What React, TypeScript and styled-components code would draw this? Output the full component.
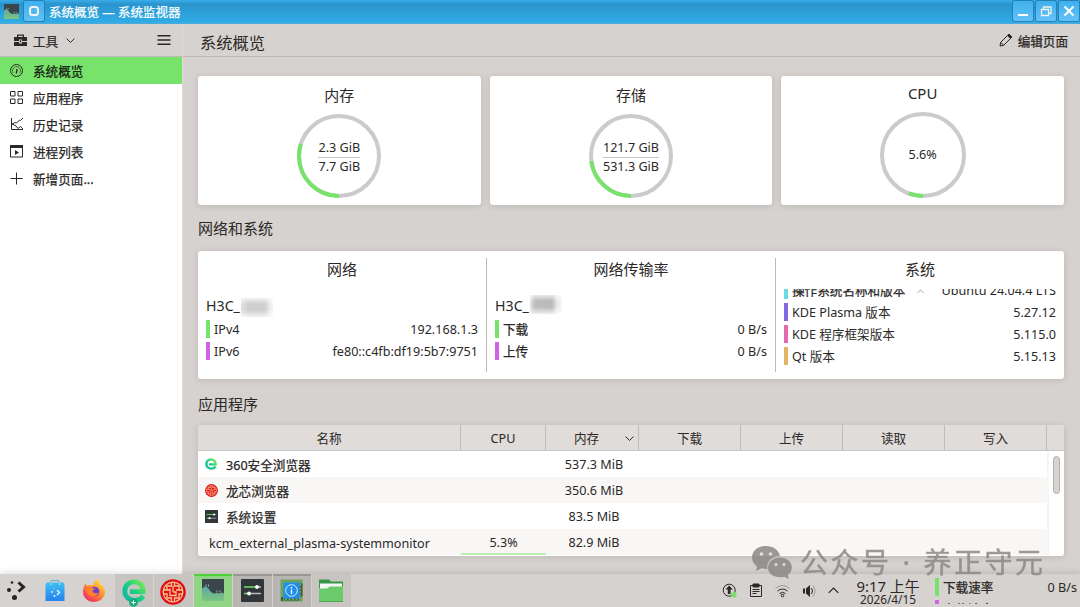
import type { ReactNode } from 'react';
import styled, { createGlobalStyle, css } from 'styled-components';

const green = '#78e36a';
const bg = '#d6d2cf';
const ink = '#2b2827';

const GlobalStyle = createGlobalStyle`
  * {
    box-sizing: border-box;
  }
  body {
    margin: 0;
    overflow: hidden;
    background: ${bg};
    color: ${ink};
    font-family: 'Noto Sans', 'Noto Sans CJK SC', sans-serif;
    font-size: 12.6px;
    line-height: 18px;
  }
  svg {
    display: block;
    flex: none;
  }
`;

const Screen = styled.div`
  position: relative;
  display: flex;
  flex-direction: column;
  width: 1080px;
  height: 607px;
  overflow: hidden;
  white-space: nowrap;
`;

/* hinted CJK glyphs look a little heavier than regular */
const firm = css`
  -webkit-text-stroke: 0.25px currentColor;
`;

/* ---- title bar ---- */
const TitleBar = styled.header`
  display: flex;
  align-items: flex-start;
  height: 24px;
  flex: none;
  padding: 1px 1px 0 4px;
  background: linear-gradient(#38aeea 0, #2a94cc 4px, #2fa9e3 20px, #31aee9 23px, #6da5c4 24px);
  color: #fff;
`;
const TitleIcon = styled.div`
  width: 15px;
  margin: 3px 5px 0 0;
`;
const TitleText = styled.div`
  flex: 1;
  padding: 3px 0 0 5px;
  font-size: 12.5px;
  ${firm}
`;
const TitleButton = styled.div`
  width: 20px;
  height: 20px;
  margin-left: 3px;
  border-radius: 2px;
  background: linear-gradient(#3eb0ee, #62c2f8);
  box-shadow: 0 0 0 1px #2680b4;
  ${TitleIcon} + & {
    margin-left: 0;
  }
`;

/* ---- window ---- */
const Body = styled.div`
  display: flex;
  flex: 1;
  min-height: 0;
`;
const Sidebar = styled.aside`
  width: 182px;
  flex: none;
  background: #fff;
`;
const SidebarHeader = styled.div`
  display: flex;
  align-items: center;
  height: 33px;
  padding: 0 11px 0 13px;
  background: ${bg};
  border-bottom: 1px solid #bdb9b7;
`;
const ToolLabel = styled.span`
  padding-top: 3px;
  margin: 0 8px 0 5px;
  ${firm}
`;
const Spacer = styled.div`
  flex: 1;
`;
const NavItem = styled.div<{ $active?: boolean }>`
  display: flex;
  align-items: center;
  gap: 9px;
  height: 27px;
  padding: 0 0 0 9px;
  background: ${({ $active }) => ($active ? green : 'transparent')};
  color: ${({ $active }) => ($active ? '#151a14' : ink)};
  span {
    padding-top: 2px;
    ${firm}
  }
`;
const Content = styled.main`
  flex: 1;
  min-width: 0;
  border-left: 1px solid #dedbd9;
`;
const PageHeader = styled.div`
  display: flex;
  align-items: center;
  justify-content: space-between;
  height: 33px;
  padding: 0 12px 0 17px;
  border-bottom: 1px solid #bdb9b7;
`;
const PageTitle = styled.h1`
  margin: 0;
  padding-top: 5px;
  font-size: 16.3px;
  font-weight: 400;
  line-height: 22px;
`;
const EditButton = styled.div`
  display: flex;
  align-items: center;
  gap: 5px;
  span {
    padding-top: 3px;
    ${firm}
  }
`;
const Page = styled.div`
  padding: 19px 16px 0 15px;
`;

const card = css`
  background: #fff;
  border-radius: 3px;
  box-shadow: 0 1px 6px rgba(90, 80, 75, 0.2);
`;
const Gauges = styled.div`
  display: grid;
  grid-template-columns: repeat(3, 1fr);
  gap: 9px;
`;
const GaugeCard = styled.section<{ $top?: number }>`
  ${card}
  display: flex;
  flex-direction: column;
  align-items: center;
  height: 129px;
  padding-top: ${({ $top = 9 }) => $top}px;
`;
const CardTitle = styled.h3`
  margin: 0;
  font-size: 15px;
  font-weight: 400;
  line-height: 20px;
  text-align: center;
`;
const RingBox = styled.div`
  display: grid;
  place-items: center;
  margin-top: 9px;
  > * {
    grid-area: 1 / 1;
  }
`;
const Fraction = styled.div`
  padding-top: 1px;
  text-align: center;
  line-height: 19px;
  div + div {
    border-top: 1px solid #c9c4bb;
    line-height: 18px;
  }
`;
const SectionTitle = styled.h2<{ $top: number }>`
  margin: 0;
  height: 46px;
  padding-top: ${({ $top }) => $top}px;
  font-size: 15px;
  font-weight: 400;
  line-height: 20px;
`;

/* ---- network and system ---- */
const InfoCard = styled.section`
  ${card}
  display: grid;
  grid-template-columns: 289px 289px 288px;
  height: 128px;
  padding: 7px 0;
`;
const InfoColumn = styled.div`
  display: flex;
  flex-direction: column;
  min-width: 0;
  padding: 1px 9px 0 8px;
  & + & {
    border-left: 1px solid #bcb9b7;
    margin-left: -1px;
    padding-left: 8px;
  }
  &:last-child {
    padding-right: 8px;
  }
`;
const Device = styled.div`
  display: flex;
  align-items: center;
  height: 24px;
  margin-top: 15px;
  font-size: 14.2px;
`;
const Smudge = styled.i<{ $dark?: boolean }>`
  width: 32px;
  height: 19px;
  margin: ${({ $dark }) => ($dark ? '-3px 0 0 1px' : '3px 0 0 1px')};
  background: ${({ $dark }) =>
    $dark
      ? 'linear-gradient(90deg, #e6e6e6, #bdbdbd 5px, #b9b9b9 22px, #e8e8e8 27px, #f6f6f6)'
      : 'linear-gradient(90deg, #e2e2e2, #cecece 8px, #cfcfcf 24px, #ececec 29px, #f6f6f6)'};
  mask-image: linear-gradient(rgba(0, 0, 0, 0.3), #000 6px, #000 12px, rgba(0, 0, 0, 0.25));
`;
const Clip = styled.div<{ $height: number; $shift?: number }>`
  height: ${({ $height }) => $height}px;
  margin-top: ${({ $shift = 0 }) => ($shift ? 10 : 0)}px;
  overflow: hidden;
  > :first-child {
    margin-top: ${({ $shift = 0 }) => -$shift}px;
  }
`;
const InfoRow = styled.div`
  display: flex;
  align-items: center;
  height: 22px;
`;
const Swatch = styled.i<{ $color: string }>`
  width: 4px;
  height: 18px;
  margin-right: 4px;
  background: ${({ $color }) => $color};
`;
const RowName = styled.span<{ $cjk: boolean }>`
  flex: 1;
  display: flex;
  align-items: center;
  gap: 12px;
  padding-top: 2px;
  ${({ $cjk }) => $cjk && firm}
`;
const RowValue = styled.span`
  padding-top: 1px;
`;

/* ---- applications table ---- */
const Table = styled.section`
  ${card}
  height: 131px;
  overflow: hidden;
`;
const columns = '263px 85px 93px 102px 102px 102px 102px 1fr';
const HeadRow = styled.div`
  display: grid;
  grid-template-columns: ${columns};
  height: 26px;
  background: #dfdcd9;
  border-bottom: 1px solid #c9c6c4;
`;
const HeadCell = styled.div`
  display: flex;
  align-items: center;
  justify-content: center;
  padding-top: 3px;
  border-right: 1px solid #bebbb9;
  &:last-child {
    border-right: 0;
  }
  svg {
    margin: -2px -24px 0 26px;
  }
`;
const TableBody = styled.div`
  display: flex;
  height: 105px;
`;
const Rows = styled.div`
  width: 849px;
`;
const Row = styled.div`
  display: grid;
  grid-template-columns: ${columns};
  align-items: center;
  height: 26px;
  &:nth-child(even) {
    background: #f8f7f6;
  }
`;
const NameCell = styled.div`
  display: flex;
  align-items: center;
  padding-left: 7px;
`;
const AppIcon = styled.div`
  width: 13px;
  margin-right: 8px;
`;
const AppName = styled.span<{ $plain: boolean }>`
  padding: 3px 0 0 ${({ $plain }) => ($plain ? 4 : 0)}px;
  ${({ $plain }) => !$plain && firm}
`;
const CpuCell = styled.div<{ $used: boolean }>`
  height: 26px;
  line-height: 28px;
  text-align: center;
  border-bottom: ${({ $used }) => ($used ? '2px solid #b9edb1' : '0')};
`;
const MemCell = styled.div`
  text-align: center;
  padding: 2px 0 0 3px;
`;
const ScrollTrack = styled.div`
  flex: 1;
  padding: 5px 0 0 4px;
  border-left: 2px solid #f6f5f4;
`;
const ScrollThumb = styled.div`
  width: 7px;
  height: 38px;
  border: 1px solid #b1afad;
  border-radius: 4px;
  background: #d6d4d2;
`;

/* ---- task bar ---- */
const TaskBar = styled.footer`
  display: flex;
  height: 33px;
  flex: none;
  background: ${bg};
  box-shadow: 0 -1px 7px rgba(80, 70, 65, 0.2);
`;
const Launcher = styled.div`
  width: 35.5px;
  padding: 5px 0 0 6px;
`;
const Task = styled.div<{ $state?: 'open' | 'grouped' | 'active' }>`
  display: flex;
  justify-content: center;
  width: 38.5px;
  margin-right: 1px;
  padding-top: ${({ $state }) => ($state === 'active' || $state === 'grouped' ? 3 : 5)}px;
  background: ${({ $state }) =>
    $state === 'active' ? '#90d586' : $state === 'grouped' ? '#b9b5b3' : $state === 'open' ? '#c8c4c1' : 'none'};
  border-top: ${({ $state }) =>
    $state === 'active' ? '2px solid #4dd238' : $state === 'grouped' ? '2px solid #9a9694' : '0'};
`;
const Tray = styled.div`
  display: flex;
  align-items: center;
  gap: 12px;
`;
const Clock = styled.div`
  width: 82px;
  margin-left: 8px;
  padding-top: 3px;
  text-align: center;
`;
const Time = styled.div`
  font-size: 14.9px;
  line-height: 18px;
`;
const DateText = styled.div`
  margin-top: -3px;
  font-size: 11.8px;
  line-height: 14px;
`;
const NetSpeed = styled.div`
  width: 151px;
  padding: 2px 3px 0 6px;
`;

/* ---- watermark ---- */
const Watermark = styled.div`
  position: absolute;
  left: 751px;
  top: 543px;
  display: flex;
  align-items: center;
  height: 38px;
  color: #8b8987;
  opacity: 0.85;
  font-size: 28px;
  line-height: 38px;
  letter-spacing: 2.5px;
  -webkit-text-stroke: 0.5px currentColor;
  span:nth-of-type(1) {
    margin-left: 8px;
  }
  span:nth-of-type(2) {
    width: 32px;
    text-align: center;
  }
`;

const Chevron = ({ up, size = 9, color = ink }: { up?: boolean; size?: number; color?: string }) => (
  <svg width={size} height={size} viewBox="0 0 10 10" fill="none" stroke={color} strokeWidth="1.1">
    <path d={up ? 'M.6 7.2 5 2.8l4.400 4.400' : 'M.6 2.8 5 7.2l4.400-4.400'} />
  </svg>
);

const Ring = ({ value, size = 84 }: { value: number; size?: number }) => {
  const r = size / 2 - 2;
  const len = 2 * Math.PI * r;
  return (
    <svg width={size} height={size} fill="none" strokeWidth="4">
      <circle cx={size / 2} cy={size / 2} r={r} stroke="#cbcbcb" />
      <circle
        cx={size / 2}
        cy={size / 2}
        r={r}
        stroke={green}
        strokeDasharray={`${value * len} ${len}`}
        transform={`rotate(90 ${size / 2} ${size / 2})`}
      />
    </svg>
  );
};

const MonitorIcon = ({ size }: { size: number }) => (
  <svg width={size} height={size} viewBox="0 0 22 22">
    <defs>
      <linearGradient id="hill" x1="0" y1="0" x2="0" y2="1">
        <stop offset="0" stopColor="#5fa7a0" />
        <stop offset="1" stopColor="#7cc582" />
      </linearGradient>
    </defs>
    <rect width="22" height="22" fill="#3b464c" />
    <path d="M0 9.500 2 8l2-.5 2 1.500 2.500 3.500 3 2 4-.5 2 .5 2-1 2.500 1V22H0z" fill="url(#hill)" />
    <path d="M4 5.500v2M6.500 5.500v2M15 11.500v2M18 11.500v2" stroke="#8db9b0" fill="none" />
  </svg>
);

const SettingsIcon = ({ size }: { size: number }) => (
  <svg width={size} height={size} viewBox="0 0 23 23">
    <rect width="23" height="23" rx="1" fill="#30363a" />
    <path d="M3 8h12M3 14.500h4" stroke="#70df61" strokeWidth="1.6" />
    <path d="M15 8h5M8 14.500h12" stroke="#b9bdbd" strokeWidth="1.300" />
    <circle cx="16" cy="8" r="1.900" fill="#fff" />
    <circle cx="8" cy="14.500" r="1.900" fill="#fff" />
  </svg>
);

const Browser360Icon = ({ size, badge }: { size: number; badge?: boolean }) => (
  <svg width={size} height={badge ? (size * 28) / 24 : size} viewBox={badge ? '0 0 24 28' : '0 0 24 24'}>
    <defs>
      <linearGradient id="e360" x1="0" y1="1" x2="1" y2="0">
        <stop offset="0" stopColor="#0db6a0" />
        <stop offset=".5" stopColor="#18ce86" />
        <stop offset="1" stopColor="#7bea4d" />
      </linearGradient>
    </defs>
    <path
      d="M8 12.700h13.300C21.500 6.500 17.500 2.800 12.200 2.800 6.500 2.800 2.800 7 2.800 12s3.700 9.300 9.700 9.300c4 0 6.800-1.500 8.800-4.300"
      fill="none"
      stroke="url(#e360)"
      strokeWidth="4.800"
    />
    {badge && (
      <>
        <circle cx="11.500" cy="23.500" r="4.300" fill="#17a877" />
        <path d="M9.300 23.500h4.400M11.500 21.300v4.400" stroke="#fff" />
      </>
    )}
  </svg>
);

const LoongIcon = ({ size }: { size: number }) => (
  <svg width={size} height={size} viewBox="0 0 26 26" fill="none" stroke="#f8c58a" strokeWidth="1.3">
    <circle cx="13" cy="13" r="12.800" fill="#df0f19" stroke="none" />
    <circle cx="13" cy="13" r="9.800" />
    <path d="M11.500 3.500V7H7v3.500M14.500 3.500V7H19v3.500M3.500 11H10M16 11h6.500M3.500 15H7v4h4.500v3.500M22.500 15H19v4h-4.500v3.500M10 9.500v7h6v-3.500h-3M13 7v6" />
  </svg>
);

const navItems: { label: string; icon: ReactNode }[] = [
  {
    label: '系统概览',
    icon: (
      <>
        <circle cx="7.500" cy="7.500" r="6" />
        <path d="M4.300 9.800a3.900 3.900 0 1 1 6.400 0" strokeDasharray="1.300 .7" />
        <path d="M8 6 7.300 10.500" strokeWidth="1.400" />
      </>
    ),
  },
  {
    label: '应用程序',
    icon: <path d="M1.500 1.500h4.500v4.500h-4.500zM9 1.500h4.500v4.500H9zM1.500 9h4.500v4.500h-4.500zM9 9h4.500v4.500H9z" />,
  },
  {
    label: '历史记录',
    icon: <path d="M2.500 1v11.500H14M2.500 8l3-2.500 2 .5 3-3 1 .5L14 1M3 6.500l4 2.500 2 2.500 2.500-2 2.500 2.500" />,
  },
  {
    label: '进程列表',
    icon: (
      <>
        <path d="M1.500 2.500h12v10.500h-12z" />
        <path d="M1 1h13v3H1zM6 6v5l4-2.500z" fill={ink} stroke="none" />
      </>
    ),
  },
  { label: '新增页面...', icon: <path d="M7.500 1.500v12M1.500 7.500h12" /> },
];

const system = [
  { name: '操作系统名称和版本', value: 'Ubuntu 24.04.4 LTS', color: '#6bdbe3' },
  { name: 'KDE Plasma 版本', value: '5.27.12', color: '#836ae3' },
  { name: 'KDE 程序框架版本', value: '5.115.0', color: '#e36aac' },
  { name: 'Qt 版本', value: '5.15.13', color: '#e0b568' },
];

const apps: { name: string; icon?: ReactNode; cpu?: string; mem: string }[] = [
  { name: '360安全浏览器', icon: <Browser360Icon size={12} />, mem: '537.3 MiB' },
  { name: '龙芯浏览器', icon: <LoongIcon size={13} />, mem: '350.6 MiB' },
  { name: '系统设置', icon: <SettingsIcon size={13} />, mem: '83.5 MiB' },
  { name: 'kcm_external_plasma-systemmonitor', cpu: '5.3%', mem: '82.9 MiB' },
];

const InfoLine = ({ name, value, color, arrow }: { name: string; value: string; color: string; arrow?: boolean }) => (
  <InfoRow>
    <Swatch $color={color} />
    <RowName $cjk={/^[\u4e00-\u9fff]/.test(name)}>
      {name}
      {arrow && <Chevron up size={7} color="#8a8886" />}
    </RowName>
    <RowValue>{value}</RowValue>
  </InfoRow>
);

const App = () => {
  return (
    <>
      <GlobalStyle />
      <Screen>
        <TitleBar>
          <TitleIcon>
            <MonitorIcon size={15} />
          </TitleIcon>
          <TitleButton>
            <svg width="20" height="20" fill="none" stroke="#f4f1ee" strokeWidth="2">
              <rect x="6" y="6" width="8" height="8" rx="2.500" />
            </svg>
          </TitleButton>
          <TitleText>系统概览 — 系统监视器</TitleText>
          <TitleButton>
            <svg width="20" height="20" stroke="#fff" strokeWidth="2">
              <path d="M5 14h10" />
            </svg>
          </TitleButton>
          <TitleButton>
            <svg width="20" height="20" fill="none" stroke="#f4f1ee" strokeWidth="1.300">
              <path d="M5.500 8.500h7v6h-7zM7.500 8V6h7.500v6.500h-2" />
            </svg>
          </TitleButton>
          <TitleButton>
            <svg width="20" height="20" stroke="#fff" strokeWidth="2">
              <path d="m5.500 5.500 9 9M14.500 5.500l-9 9" />
            </svg>
          </TitleButton>
        </TitleBar>

        <Body>
          <Sidebar>
            <SidebarHeader>
              <svg width="15" height="13" viewBox="0 0 15 13" fill={ink}>
                <path d="M4 3V.5h7V3h3v4H9V5.500H6V7H1V3zM5.300 3h4.400V1.700H5.300zM1 8h5v1.500h3V8h5v4H1z" />
                <path d="M6.800 6.300h1.400v2H6.800z" />
              </svg>
              <ToolLabel>工具</ToolLabel>
              <Chevron />
              <Spacer />
              <svg width="14" height="12" stroke={ink} strokeWidth="1.400">
                <path d="M.5 1.700h13M.5 6h13M.5 10.300h13" />
              </svg>
            </SidebarHeader>
            {navItems.map(({ label, icon }, i) => (
              <NavItem key={label} $active={i === 0}>
                <svg width="15" height="15" fill="none" stroke={ink} strokeWidth="1">
                  {icon}
                </svg>
                <span>{label}</span>
              </NavItem>
            ))}
          </Sidebar>

          <Content>
            <PageHeader>
              <PageTitle>系统概览</PageTitle>
              <EditButton>
                <svg width="14" height="14" fill="none" stroke={ink} strokeWidth="1">
                  <path d="m1 13 .7-3.700L9.500 1.500l3 3-7.800 7.800zM1.700 9.300l3 3" />
                  <path d="m8.500 2.500 3 3 1.500-1.500-3-3z" fill={ink} />
                </svg>
                <span>编辑页面</span>
              </EditButton>
            </PageHeader>

            <Page>
              <Gauges>
                <GaugeCard>
                  <CardTitle>内存</CardTitle>
                  <RingBox>
                    <Ring value={0.298} />
                    <Fraction>
                      <div>2.3 GiB</div>
                      <div>7.7 GiB</div>
                    </Fraction>
                  </RingBox>
                </GaugeCard>
                <GaugeCard>
                  <CardTitle>存储</CardTitle>
                  <RingBox>
                    <Ring value={0.229} />
                    <Fraction>
                      <div>121.7 GiB</div>
                      <div>531.3 GiB</div>
                    </Fraction>
                  </RingBox>
                </GaugeCard>
                <GaugeCard $top={7}>
                  <CardTitle>CPU</CardTitle>
                  <RingBox>
                    <Ring value={0.056} size={86} />
                    <span>5.6%</span>
                  </RingBox>
                </GaugeCard>
              </Gauges>

              <SectionTitle $top={13}>网络和系统</SectionTitle>
              <InfoCard>
                <InfoColumn>
                  <CardTitle>网络</CardTitle>
                  <Device>
                    H3C_
                    <Smudge />
                  </Device>
                  <InfoLine name="IPv4" value="192.168.1.3" color={green} />
                  <InfoLine name="IPv6" value="fe80::c4fb:df19:5b7:9751" color="#d063e3" />
                </InfoColumn>
                <InfoColumn>
                  <CardTitle>网络传输率</CardTitle>
                  <Device>
                    H3C_
                    <Smudge $dark />
                  </Device>
                  <InfoLine name="下载" value="0 B/s" color={green} />
                  <InfoLine name="上传" value="0 B/s" color="#d063e3" />
                </InfoColumn>
                <InfoColumn>
                  <CardTitle>系统</CardTitle>
                  <Clip $height={79} $shift={10}>
                    {system.map((s, i) => (
                      <InfoLine key={s.name} {...s} arrow={i === 0} />
                    ))}
                  </Clip>
                </InfoColumn>
              </InfoCard>

              <SectionTitle $top={15}>应用程序</SectionTitle>
              <Table>
                <HeadRow>
                  <HeadCell>名称</HeadCell>
                  <HeadCell>CPU</HeadCell>
                  <HeadCell>
                    内存
                    <Chevron />
                  </HeadCell>
                  <HeadCell>下载</HeadCell>
                  <HeadCell>上传</HeadCell>
                  <HeadCell>读取</HeadCell>
                  <HeadCell>写入</HeadCell>
                  <HeadCell />
                </HeadRow>
                <TableBody>
                  <Rows>
                    {apps.map(({ name, icon, cpu, mem }) => (
                      <Row key={name}>
                        <NameCell>
                          {icon && <AppIcon>{icon}</AppIcon>}
                          <AppName $plain={!icon}>{name}</AppName>
                        </NameCell>
                        <CpuCell $used={!!cpu}>{cpu}</CpuCell>
                        <MemCell>{mem}</MemCell>
                      </Row>
                    ))}
                  </Rows>
                  <ScrollTrack>
                    <ScrollThumb />
                  </ScrollTrack>
                </TableBody>
              </Table>
            </Page>
          </Content>
        </Body>

        <TaskBar>
          <Launcher>
            <svg width="22" height="24" viewBox="0 0 22 24" fill="#262322">
              <circle cx="6" cy="3.500" r="1.300" />
              <circle cx="3" cy="11" r="2" />
              <circle cx="8.500" cy="18.500" r="2.500" />
              <path d="m12.500 3.500 5 4.500-5 4.500" fill="none" stroke="#262322" strokeWidth="3" />
            </svg>
          </Launcher>
          <Task>
            <svg width="20" height="23" viewBox="0 0 20 23">
              <defs>
                <linearGradient id="bag" x1="0" y1="0" x2="0" y2="1">
                  <stop offset="0" stopColor="#3fc0f0" />
                  <stop offset="1" stopColor="#2580f0" />
                </linearGradient>
              </defs>
              <path d="M6 6V3.500Q6 1.500 8 1.500h4.500q2 0 2 2V6" fill="none" stroke="#62b4d4" strokeWidth="1.200" />
              <path d="M1.500 3.500h17l1 3v15.500h-19V6.500z" fill="url(#bag)" />
              <path d="M6 6V3.500M14.500 6V3.500" stroke="#b9e2ef" />
              <path d="m12 11 2.500 2.500L12 16" fill="none" stroke="#e8f6ff" strokeWidth="1.400" />
              <circle cx="7" cy="13" r="1" fill="#cfeaff" />
              <circle cx="8.500" cy="10" r=".6" fill="#cfeaff" />
              <circle cx="9.500" cy="17" r="1.100" fill="#cfeaff" />
            </svg>
          </Task>
          <Task>
            <svg width="24" height="25" viewBox="0 0 24 25">
              <defs>
                <linearGradient id="fox" x1=".9" y1="0" x2=".2" y2="1">
                  <stop offset="0" stopColor="#fff04a" />
                  <stop offset=".5" stopColor="#ff8a2b" />
                  <stop offset="1" stopColor="#f0246c" />
                </linearGradient>
              </defs>
              <path
                d="M15 0c2 2 3 3.500 3.500 5C21.500 7 23 10 23 13c-.5 6-5 10-11 10S1 18.500 1 13c0-3.500 1-6 2.500-8.500L5 7l3-1 3 .5C11.500 4 13 1.500 15 0z"
                fill="url(#fox)"
              />
              <circle cx="12.500" cy="12.500" r="4.800" fill="#6c3fc9" />
              <path d="M4 8c3-1.500 5-.5 6.500 1l3 .8-3 1.700c0 2.500 3 3.500 5.500 2-.5 2.500-3 4-5 4-4 0-6.500-3-7-9.500z" fill="#ff7f2a" />
            </svg>
          </Task>
          <Task $state="open">
            <Browser360Icon size={24} badge />
          </Task>
          <Task $state="open">
            <LoongIcon size={26} />
          </Task>
          <Task $state="active">
            <MonitorIcon size={22} />
          </Task>
          <Task $state="grouped">
            <SettingsIcon size={23} />
          </Task>
          <Task $state="grouped">
            <svg width="23" height="24" viewBox="0 0 23 24">
              <path d="M.5.500h22v22h-22z" fill="#6ca25c" />
              <path d="M1 18h2v4H1zM19.500 4.500h3v13h-3zM4 19.500h15v2H4z" fill="#3d5f3b" />
              <path d="M20.500 5v14M5 20.500h15" stroke="#7ba563" strokeDasharray="2 1.500" />
              <path d="M3.500 3.500h16v16h-16z" fill="#1f8fe9" />
              <circle cx="11.500" cy="11.500" r="5.800" fill="none" stroke="#d5ecff" />
              <path d="M11.500 10.500v4.500M11.500 8v1.500" stroke="#fff" strokeWidth="1.300" />
            </svg>
          </Task>
          <Task $state="open">
            <svg width="24" height="24" viewBox="0 0 24 24">
              <path d="M0 .5h10l2 2h12V9H0z" fill="#389546" />
              <path d="M1 4.500h22V10H1z" fill="#f5f6f3" />
              <path d="M0 9.500h8l3-2h13v15H0z" fill="#6bcb6b" />
              <path d="M0 22h24v1H0z" fill="#48a652" />
            </svg>
          </Task>
          <Spacer />
          <Tray>
            <svg width="15" height="15" viewBox="0 0 15 15" fill="none" stroke={ink}>
              <circle cx="7.200" cy="7.200" r="6" />
              <path d="M7.200 2.500 3.500 6.500h2.300V11h2.800V6.500h2.300z" fill={ink} stroke="none" />
              <circle cx="12" cy="11.700" r="2.700" fill={green} stroke="none" />
            </svg>
            <svg width="14" height="15" viewBox="0 0 14 15" fill="none" stroke={ink}>
              <path d="M1.500 2.500h11v11h-11z" />
              <path d="M4 1h6v3H4z" fill={ink} />
              <path d="M3.500 6.500h7M3.500 8.500h7M3.500 10.500h4" />
            </svg>
            <svg width="15" height="14" viewBox="0 0 15 14" fill="none" stroke={ink}>
              <path d="M.5 4.500q7-6 14 0" stroke="#9a9795" />
              <path d="M2.500 7q5-4 10 0M4.500 9.500q3-2.500 6 0" />
              <circle cx="7.500" cy="11.500" r="1.300" />
            </svg>
            <svg width="14" height="14" viewBox="0 0 14 14" fill="none" stroke={ink}>
              <path d="M1 4.500h2v5H1zM4 4.500 8 1v12L4 9.500z" fill={ink} stroke="none" />
              <path d="M9.500 4q2 3 0 6" />
              <path d="M11 1.500q4 5.500 0 11" stroke="#9a9795" />
            </svg>
            <Chevron up size={11} />
          </Tray>
          <Clock>
            <Time>9:17 上午</Time>
            <DateText>2026/4/15</DateText>
          </Clock>
          <NetSpeed>
            <Clip $height={28}>
              <InfoLine name="下载速率" value="0 B/s" color={green} />
              <InfoLine name="上传速率" value="" color="#d063e3" arrow />
            </Clip>
          </NetSpeed>
        </TaskBar>

        <Watermark>
          <svg width="41" height="34" viewBox="0 0 41 34" fill="currentColor">
            <path d="M15 1C7 1 1 6 1 12.500c0 4 2 7 5 9L5 26l5.500-2.800c2 .6 4 .8 6.200.6C15 17 21 11 29 11 28 5 22 1 15 1z" />
            <path d="M29 12.500c-7 0-12 4.300-12 10s5 9.800 12 9.800c1.600 0 3-.2 4.300-.6L38 34l-1.200-4c2.500-1.800 4-4.500 4-7.500 0-5.700-5-10-11.800-10z" />
            <g fill="#dedbd9">
              <circle cx="10.500" cy="9" r="1.800" />
              <circle cx="19.500" cy="9" r="1.800" />
              <circle cx="25" cy="19.500" r="1.500" />
              <circle cx="33" cy="19.500" r="1.500" />
            </g>
          </svg>
          <span>公众号</span>
          <span>·</span>
          <span>养正守元</span>
        </Watermark>
      </Screen>
    </>
  );
};

export default App;
